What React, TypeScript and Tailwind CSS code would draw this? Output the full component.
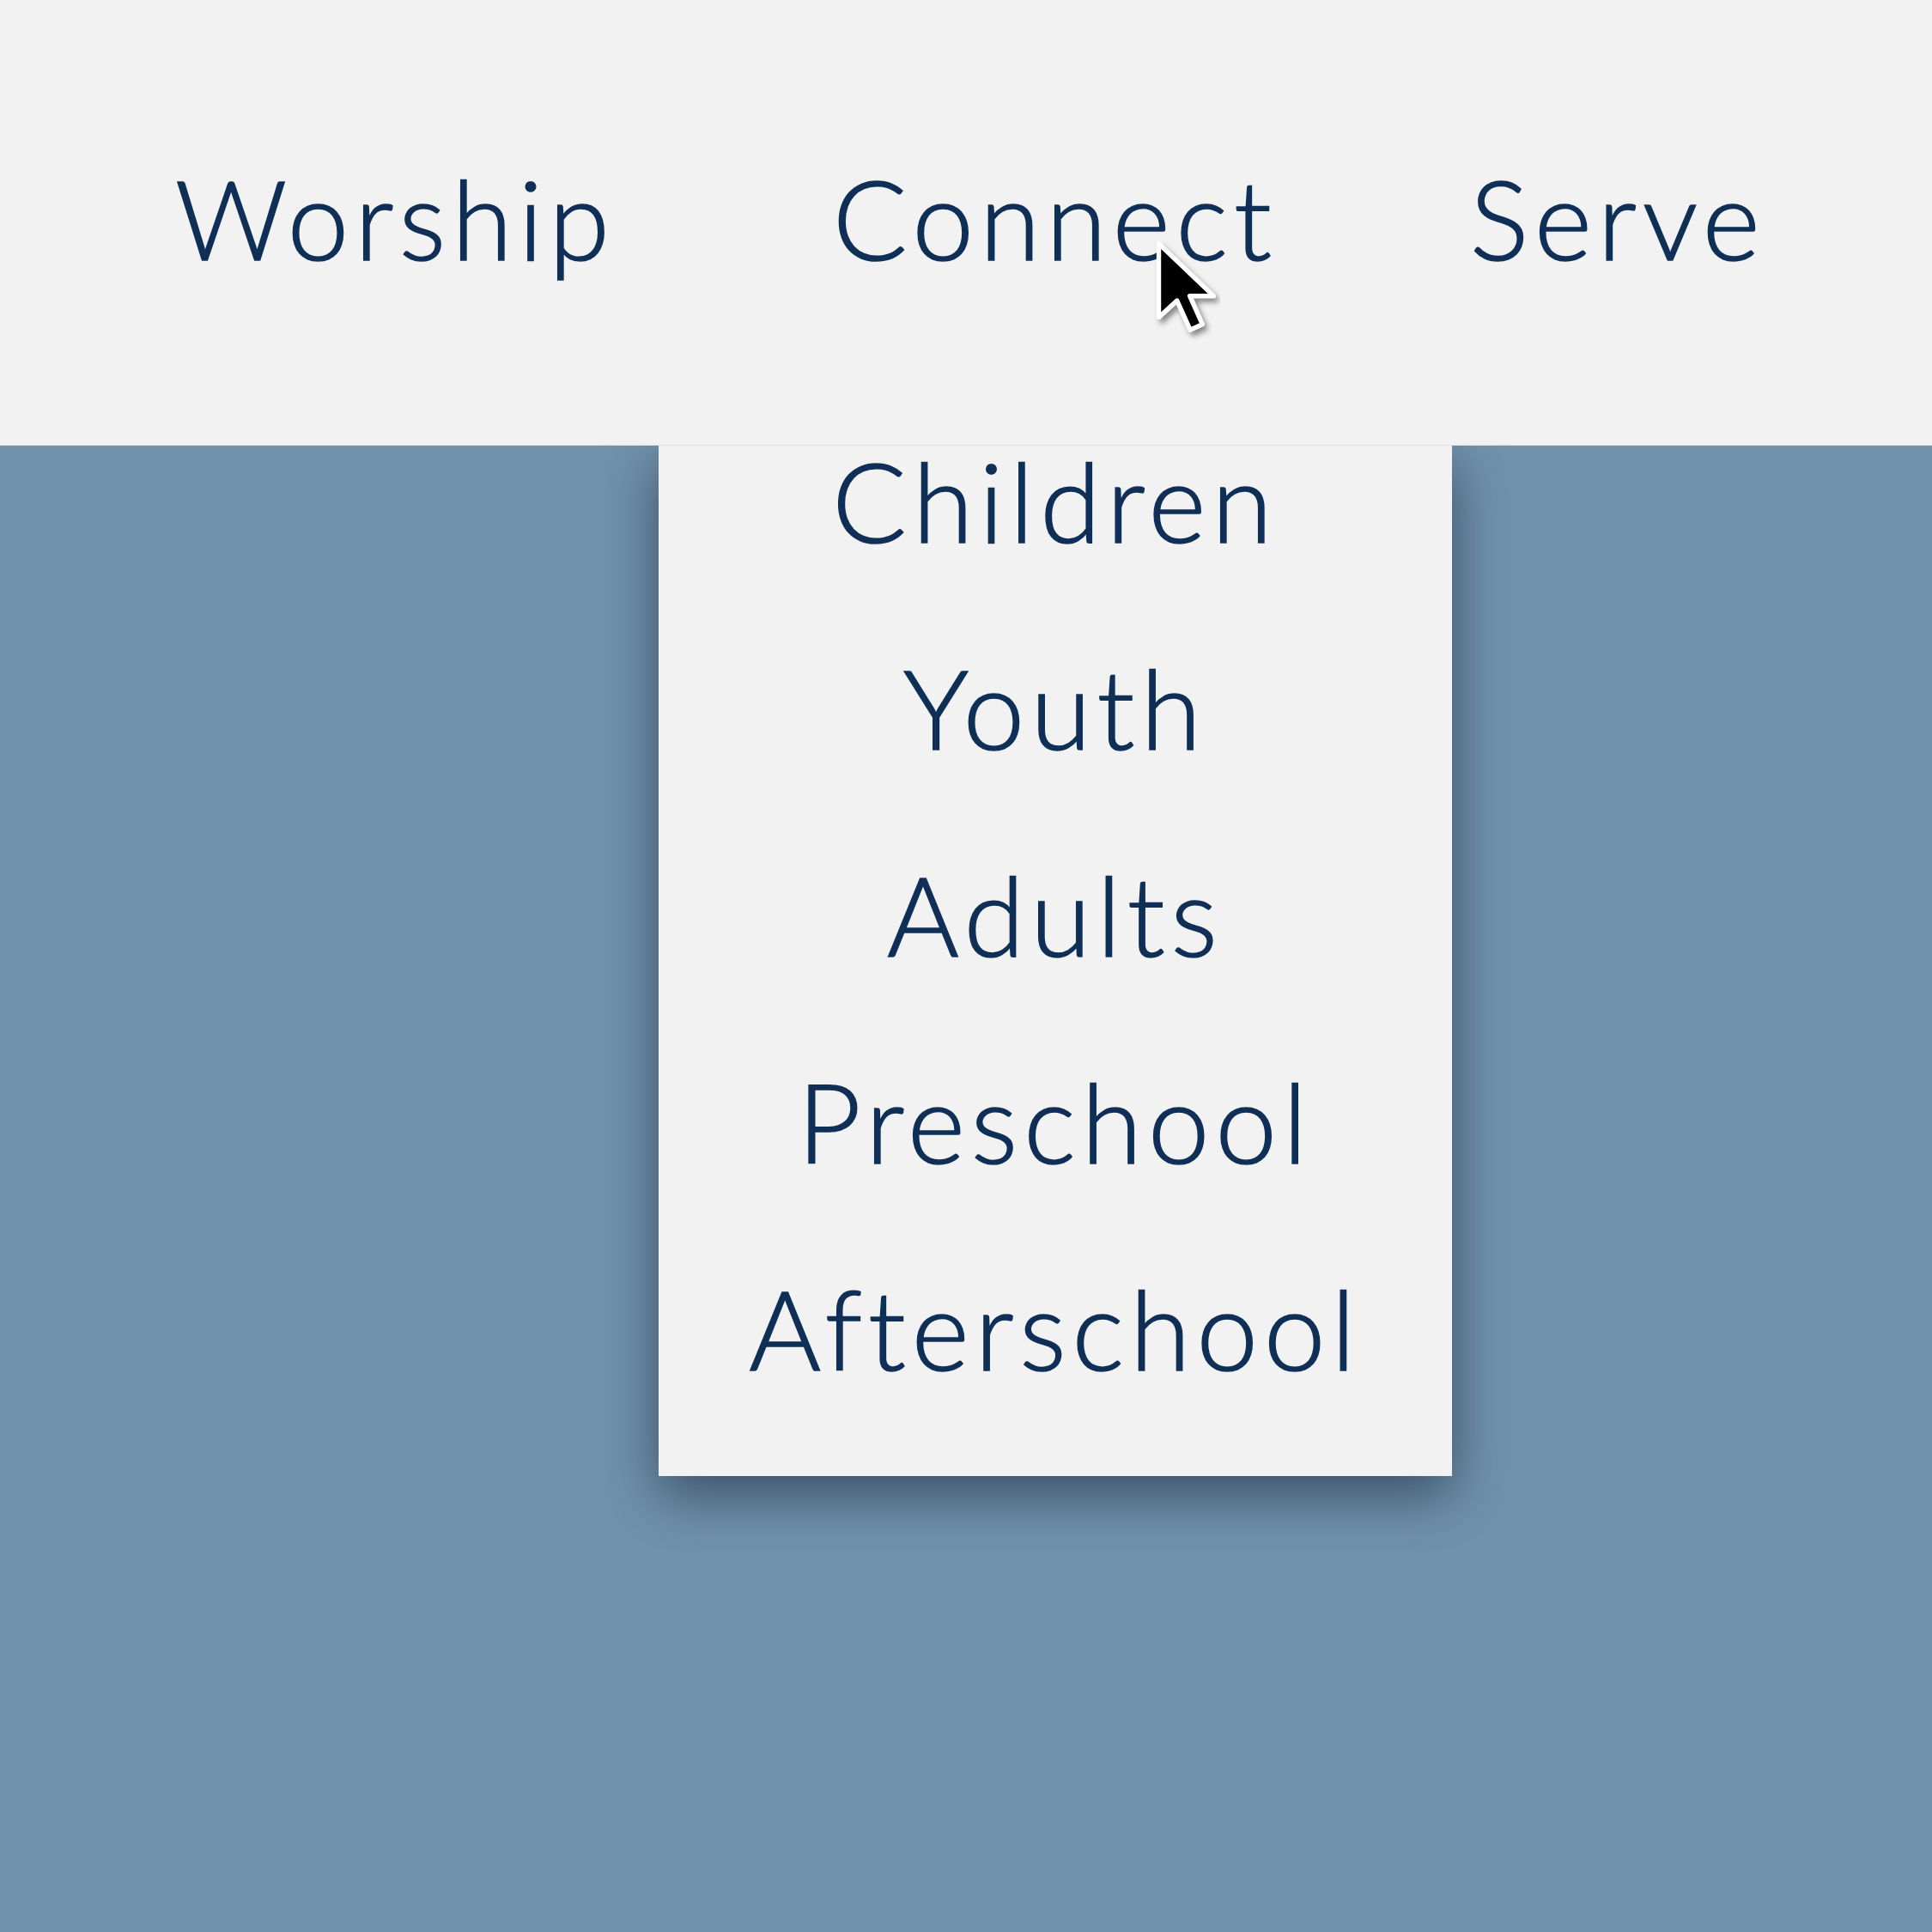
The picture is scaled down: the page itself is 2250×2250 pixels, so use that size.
const items = ['Children', 'Youth', 'Adults', 'Preschool', 'Afterschool'];

function Cursor() {
  return (
    <svg
      className="absolute left-[1343px] top-[278px] z-30"
      width="78"
      height="118"
      viewBox="0 0 13 20"
    >
      <defs>
        <filter id="cs" x="-30%" y="-30%" width="160%" height="160%">
          <feDropShadow dx="0.6" dy="0.8" stdDeviation="0.5" floodColor="#000" floodOpacity="0.45" />
        </filter>
      </defs>
      <path
        d="M1 1 L1 15.5 L4.6 12.2 L7.2 18 L9.6 16.9 L7.1 11.3 L11.8 11.3 Z"
        fill="#000"
        stroke="#fff"
        strokeWidth="0.9"
        strokeLinejoin="round"
        filter="url(#cs)"
      />
    </svg>
  );
}

export default function App() {
  return (
    <div
      className="relative w-[2250px] h-[2250px] bg-[#7192ab] overflow-hidden"
      style={{ fontFamily: 'Lato, "Open Sans", sans-serif' }}
    >
      <header className="relative z-20 h-[519px] bg-[#f2f2f2] border-b border-[#dedede] pt-[190px]">
        <nav className="flex items-start text-[128px] font-light leading-none text-[#0f2f57] tracking-[0.055em] [-webkit-text-stroke:1.6px_#0f2f57]">
          <a className="ml-[204px] w-[563px]">Worship</a>
          <a className="w-[924px] text-center">Connect</a>
          <a className="ml-[21px]">Serve</a>
        </nav>
      </header>

      <div className="absolute z-10 left-[767px] top-[519px] w-[924px] bg-[#f2f2f2] pb-[108px] shadow-[0_22px_60px_rgba(20,35,55,0.6)]">
        <ul className="flex flex-col gap-[113px] text-[128px] font-light leading-none text-[#0f2f57] tracking-[0.055em] text-center [-webkit-text-stroke:1.6px_#0f2f57]">
          {items.map((item) => (
            <li key={item} className="h-[128px]">
              {item}
            </li>
          ))}
        </ul>
      </div>

      <Cursor />
    </div>
  );
}
